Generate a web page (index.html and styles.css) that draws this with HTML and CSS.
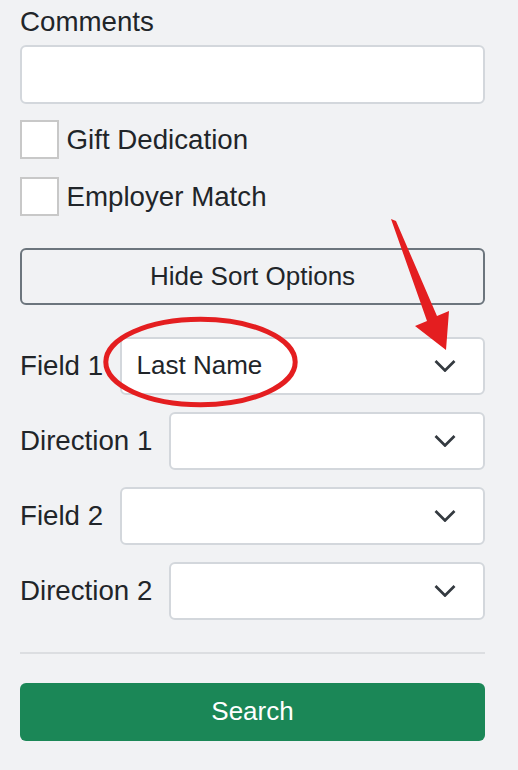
FILE: index.html
```html
<!DOCTYPE html>
<html lang="en">
<head>
  <meta charset="UTF-8" />
  <meta name="viewport" content="width=device-width, initial-scale=1">
  <title>Search</title>
  <link rel="stylesheet" href="styles.css">
</head>

<body>
  <form class="search-form">
    <label class="form-label" for="comments">Comments</label>
    <textarea id="comments" class="form-control"></textarea>

    <label class="check"><input type="checkbox" /> Gift Dedication</label>
    <label class="check"><input type="checkbox" /> Employer Match</label>

    <button type="button" class="btn btn-outline">Hide Sort Options</button>

    <div class="sort-row">
      <span class="sort-label">Field 1</span>
      <div class="select">
        <span class="select-value">Last Name</span>
        <svg class="chevron" viewBox="0 0 22 12"><polyline points="1.5,1 11,10.5 20.5,1" /></svg>
      </div>
    </div>

    <div class="sort-row">
      <span class="sort-label">Direction 1</span>
      <div class="select">
        <span class="select-value"></span>
        <svg class="chevron" viewBox="0 0 22 12"><polyline points="1.5,1 11,10.5 20.5,1" /></svg>
      </div>
    </div>

    <div class="sort-row">
      <span class="sort-label">Field 2</span>
      <div class="select">
        <span class="select-value"></span>
        <svg class="chevron" viewBox="0 0 22 12"><polyline points="1.5,1 11,10.5 20.5,1" /></svg>
      </div>
    </div>

    <div class="sort-row">
      <span class="sort-label">Direction 2</span>
      <div class="select">
        <span class="select-value"></span>
        <svg class="chevron" viewBox="0 0 22 12"><polyline points="1.5,1 11,10.5 20.5,1" /></svg>
      </div>
    </div>

    <hr>

    <button type="submit" class="btn btn-success">Search</button>
  </form>

  <!-- red markup drawn over the screenshot -->
  <svg class="annotations" viewBox="0 0 518 770">
    <ellipse cx="200.5" cy="362" rx="94.7" ry="42.7" />
    <polygon points="391,219 396,221 437,316 449,311 446,350 415,326 427,321" />
  </svg>
</body>
</html>
```

FILE: styles.css
```css
body {
  margin: 0;
  padding: 1px 33px 0 20px;
  background: #f1f2f4;
  color: #212529;
  font-family: "Liberation Sans", Arial, sans-serif;
  font-size: 27.7px;
  line-height: 41.5px;
}

.search-form {
  width: 465px;
}

.form-label {
  display: block;
}

.form-control {
  display: block;
  box-sizing: border-box;
  width: 100%;
  height: 59px;
  margin: 2px 0 0;
  border: 2px solid #d3d7dc;
  border-radius: 6px;
  background: #fff;
  resize: none;
  font: inherit;
}

.check {
  display: flex;
  align-items: center;
  gap: 7.5px;
  margin-top: 15.5px;
}

.check input {
  appearance: none;
  box-sizing: border-box;
  width: 39px;
  height: 39px;
  margin: 0;
  border: 2px solid #c8c8c8;
  border-radius: 0;
  background: #fff;
}

.btn {
  display: block;
  box-sizing: border-box;
  width: 100%;
  border-radius: 6px;
  font: inherit;
  font-size: 26px;
  line-height: 41.5px;
  text-align: center;
}

.btn-outline {
  height: 57px;
  margin-top: 30.6px;
  border: 2px solid #6c757d;
  background: transparent;
  color: #212529;
}

.btn-success {
  height: 58px;
  margin-top: 29.5px;
  border: none;
  background: #1b8757;
  color: #fff;
}

.sort-row {
  display: flex;
  align-items: center;
  gap: 16.5px;
  margin-top: 17px;
}

.btn-outline + .sort-row {
  margin-top: 31.5px;
}

.select {
  flex: 1;
  display: flex;
  align-items: center;
  box-sizing: border-box;
  height: 58px;
  padding: 0 27px 0 15px;
  border: 2px solid #d3d7dc;
  border-radius: 6px;
  background: #fff;
  font-size: 26px;
}

.select-value {
  flex: 1;
}

.chevron {
  width: 22px;
  height: 12px;
  fill: none;
  stroke: #343a40;
  stroke-width: 2.7;
}

hr {
  height: 0;
  margin: 32px 0 0;
  border: none;
  border-top: 2px solid #dcdee1;
}

.annotations {
  position: absolute;
  top: 0;
  left: 0;
  width: 518px;
  height: 770px;
  pointer-events: none;
}

.annotations ellipse {
  fill: none;
  stroke: #e41e20;
  stroke-width: 5;
}

.annotations polygon {
  fill: #e41e20;
}
```
